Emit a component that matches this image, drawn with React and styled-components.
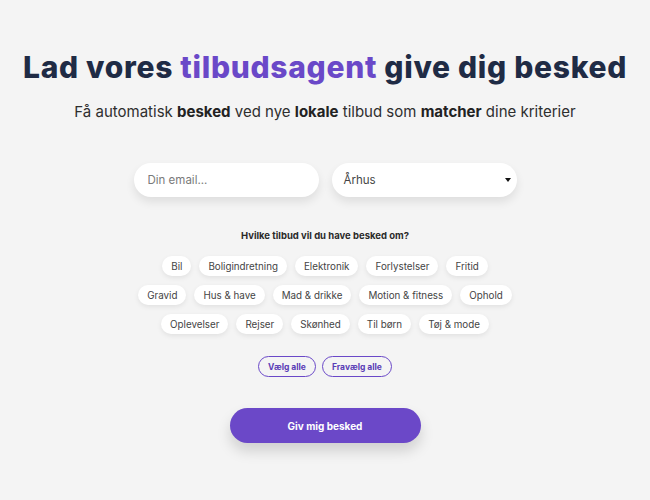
import React from "react";
import styled, { createGlobalStyle } from "styled-components";

const Global = createGlobalStyle`
  html, body { margin: 0; padding: 0; background: #f4f4f4; }
  * { box-sizing: border-box; }
  body { font-family: Inter, "Noto Sans", sans-serif; }
`;

const Page = styled.main`
  display: flex;
  flex-direction: column;
  align-items: center;
  padding-top: 48px;
  min-height: 500px;
`;

const Title = styled.h1`
  margin: 0;
  font-size: 30px;
  line-height: 38px;
  font-weight: 800;
  color: #1f2b45;
  letter-spacing: 0.7px;
`;

const Accent = styled.span`
  color: #6a48c8;
`;

const Subtitle = styled.p`
  margin: 15px 0 0;
  font-size: 15px;
  line-height: 22px;
  color: #2e2e2e;
  font-weight: 400;
  b { font-weight: 700; color: #222; }
`;

const FormRow = styled.div`
  display: flex;
  gap: 13px;
  margin-top: 40px;
`;

const Field = styled.div`
  position: relative;
  width: 185px;
  height: 34px;
  border-radius: 17px;
  background: #fff;
  box-shadow: 0 5px 10px rgba(0, 0, 0, 0.09);
  display: flex;
  align-items: center;
  padding: 0 12px;
`;

const Input = styled.input`
  border: none;
  outline: none;
  background: transparent;
  width: 100%;
  font-family: inherit;
  font-size: 11.5px;
  color: #333;
  &::placeholder { color: #7a7a7a; }
`;

const SelectText = styled.span`
  font-size: 11.5px;
  color: #444;
  flex: 1;
`;

const Caret = styled.span`
  width: 0;
  height: 0;
  border-left: 3.5px solid transparent;
  border-right: 3.5px solid transparent;
  border-top: 4px solid #111;
  margin-right: -6px;
`;

const Question = styled.h2`
  margin: 32px 0 0;
  font-size: 9.5px;
  line-height: 14px;
  font-weight: 700;
  color: #2a2a2a;
`;

const Chips = styled.div`
  margin-top: 13px;
  display: flex;
  flex-direction: column;
  align-items: center;
  gap: 9px;
`;

const ChipRow = styled.div`
  display: flex;
  gap: 8px;
`;

const Chip = styled.button`
  height: 20px;
  padding: 0 9px;
  border: none;
  border-radius: 10px;
  background: #fff;
  box-shadow: 0 2px 5px rgba(0, 0, 0, 0.08);
  font-family: inherit;
  font-size: 9.8px;
  color: #444;
  cursor: pointer;
`;

const Actions = styled.div`
  display: flex;
  gap: 6px;
  margin-top: 22px;
`;

const Outline = styled.button`
  height: 21px;
  padding: 0 9px;
  border: 1px solid #6a48c8;
  border-radius: 11px;
  background: transparent;
  color: #5a3db6;
  font-family: inherit;
  font-size: 8.5px;
  font-weight: 700;
`;

const Submit = styled.button`
  margin-top: 31px;
  width: 191px;
  height: 35px;
  border: none;
  border-radius: 18px;
  background: #6b48c8;
  color: #fff;
  font-family: inherit;
  font-size: 10px;
  font-weight: 700;
  box-shadow: 0 8px 14px rgba(0, 0, 0, 0.15);
`;

const rows = [
  ["Bil", "Boligindretning", "Elektronik", "Forlystelser", "Fritid"],
  ["Gravid", "Hus & have", "Mad & drikke", "Motion & fitness", "Ophold"],
  ["Oplevelser", "Rejser", "Skønhed", "Til børn", "Tøj & mode"],
];

export default function App() {
  return (
    <>
      <Global />
      <Page>
        <Title>
          Lad vores <Accent>tilbudsagent</Accent> give dig besked
        </Title>
        <Subtitle>
          Få automatisk <b>besked</b> ved nye <b>lokale</b> tilbud som <b>matcher</b> dine kriterier
        </Subtitle>
        <FormRow>
          <Field>
            <Input placeholder="Din email..." />
          </Field>
          <Field>
            <SelectText>Århus</SelectText>
            <Caret />
          </Field>
        </FormRow>
        <Question>Hvilke tilbud vil du have besked om?</Question>
        <Chips>
          {rows.map((r, i) => (
            <ChipRow key={i}>
              {r.map((c) => (
                <Chip key={c}>{c}</Chip>
              ))}
            </ChipRow>
          ))}
        </Chips>
        <Actions>
          <Outline>Vælg alle</Outline>
          <Outline>Fravælg alle</Outline>
        </Actions>
        <Submit>Giv mig besked</Submit>
      </Page>
    </>
  );
}
